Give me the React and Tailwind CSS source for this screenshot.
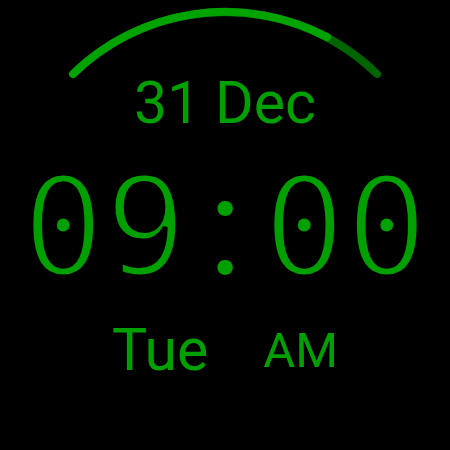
const GREEN = 'text-[#00a000]';

const Ring = () => (
  <svg className="absolute inset-0" width="450" height="450" viewBox="0 0 450 450">
    {/* remaining part of the progress */}
    <path
      d="M 73 74 A 218 218 0 0 1 377 74"
      fill="none"
      stroke="#006400"
      strokeWidth="8"
      strokeLinecap="round"
    />
    {/* elapsed part */}
    <path
      d="M 73 74 A 218 218 0 0 1 327 37"
      fill="none"
      stroke="#00a300"
      strokeWidth="8"
      strokeLinecap="round"
    />
  </svg>
);

export default function App() {
  return (
    <div className="relative w-[450px] h-[450px] bg-black overflow-hidden">
      <Ring />
      <div className={`relative flex flex-col items-center pt-[73px] ${GREEN}`}>
        <div className="text-[59px] leading-none font-['Roboto',sans-serif]">31 Dec</div>
        <div className="mt-[27px] flex text-[137px] leading-none font-['DejaVu_Sans_Mono',monospace] [-webkit-text-stroke:5px_black]">
          <span>09</span>
          <span className="w-[76px] text-center font-['Roboto',sans-serif] [-webkit-text-stroke:0px_black]">:</span>
          <span>00</span>
        </div>
        <div className="mt-[24px] flex items-start gap-[55px] font-['Roboto',sans-serif]">
          <span className="text-[59px] leading-none">Tue</span>
          <span className="mt-[6px] text-[49px] leading-none">AM</span>
        </div>
      </div>
    </div>
  );
}
